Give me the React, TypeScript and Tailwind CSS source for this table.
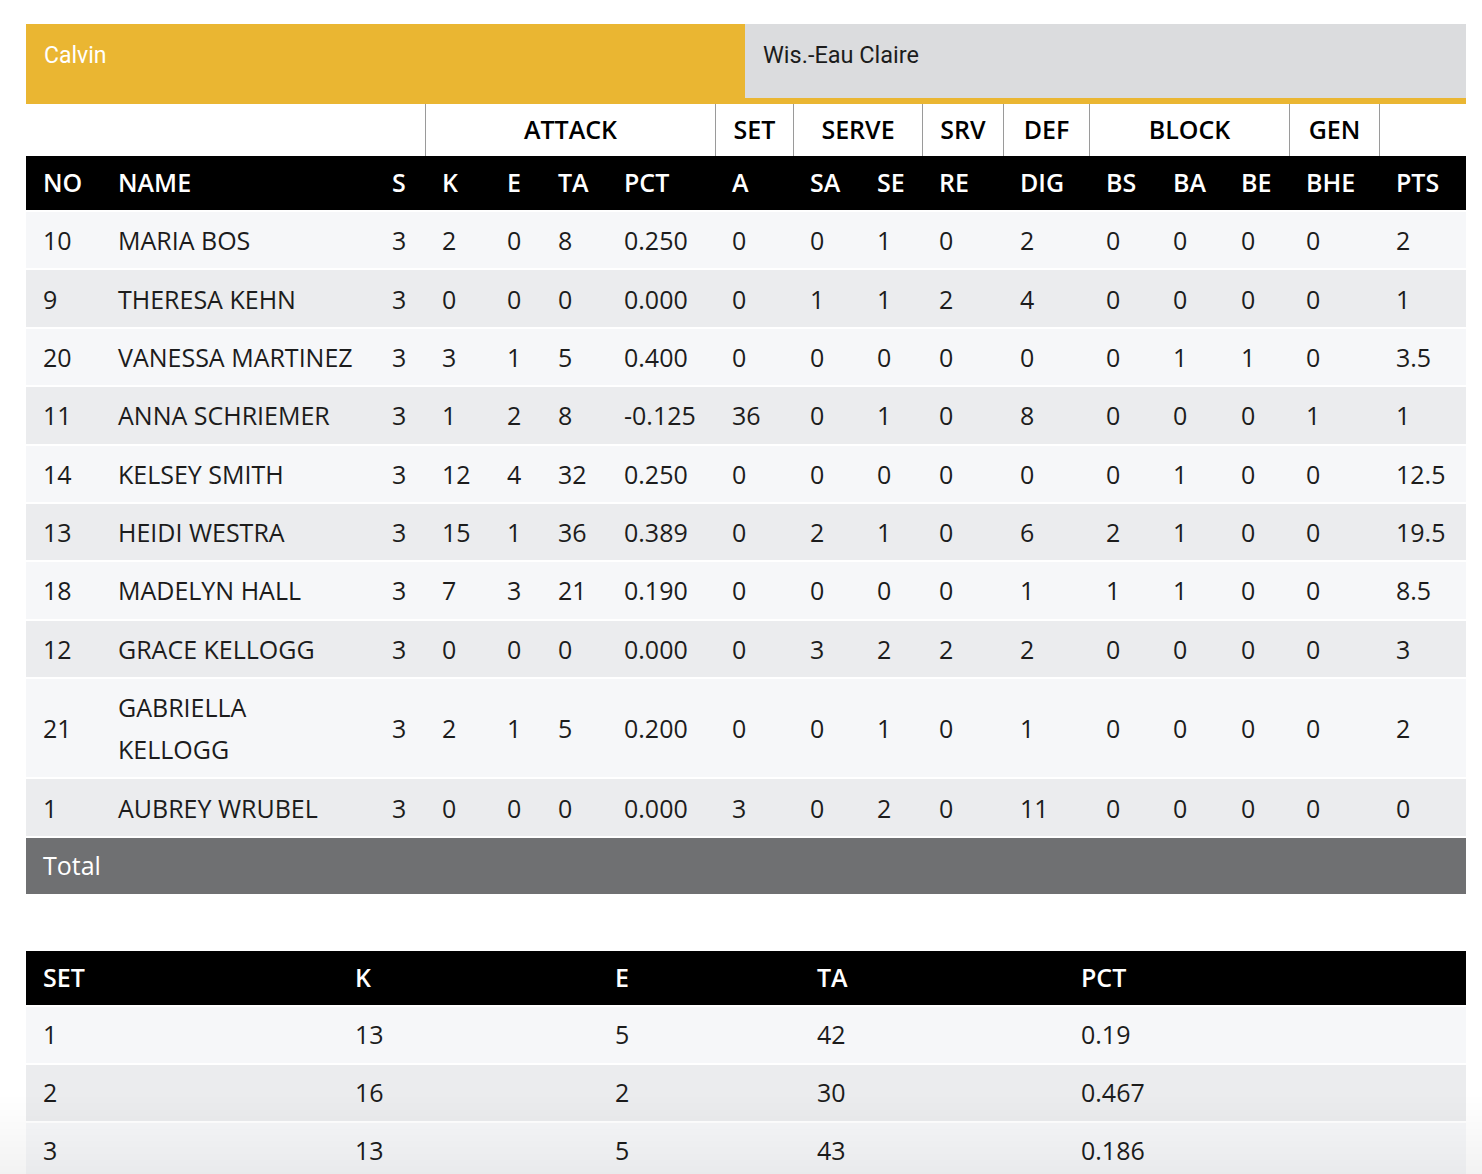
import React from 'react';

type Player = {
  no: string;
  name: string;
  stats: string[];
};

// S K E TA PCT A SA SE RE DIG BS BA BE BHE PTS
const players: Player[] = [
  { no: '10', name: 'MARIA BOS', stats: ['3', '2', '0', '8', '0.250', '0', '0', '1', '0', '2', '0', '0', '0', '0', '2'] },
  { no: '9', name: 'THERESA KEHN', stats: ['3', '0', '0', '0', '0.000', '0', '1', '1', '2', '4', '0', '0', '0', '0', '1'] },
  { no: '20', name: 'VANESSA MARTINEZ', stats: ['3', '3', '1', '5', '0.400', '0', '0', '0', '0', '0', '0', '1', '1', '0', '3.5'] },
  { no: '11', name: 'ANNA SCHRIEMER', stats: ['3', '1', '2', '8', '-0.125', '36', '0', '1', '0', '8', '0', '0', '0', '1', '1'] },
  { no: '14', name: 'KELSEY SMITH', stats: ['3', '12', '4', '32', '0.250', '0', '0', '0', '0', '0', '0', '1', '0', '0', '12.5'] },
  { no: '13', name: 'HEIDI WESTRA', stats: ['3', '15', '1', '36', '0.389', '0', '2', '1', '0', '6', '2', '1', '0', '0', '19.5'] },
  { no: '18', name: 'MADELYN HALL', stats: ['3', '7', '3', '21', '0.190', '0', '0', '0', '0', '1', '1', '1', '0', '0', '8.5'] },
  { no: '12', name: 'GRACE KELLOGG', stats: ['3', '0', '0', '0', '0.000', '0', '3', '2', '2', '2', '0', '0', '0', '0', '3'] },
  { no: '21', name: 'GABRIELLA KELLOGG', stats: ['3', '2', '1', '5', '0.200', '0', '0', '1', '0', '1', '0', '0', '0', '0', '2'] },
  { no: '1', name: 'AUBREY WRUBEL', stats: ['3', '0', '0', '0', '0.000', '3', '0', '2', '0', '11', '0', '0', '0', '0', '0'] },
];

const columns = ['NO', 'NAME', 'S', 'K', 'E', 'TA', 'PCT', 'A', 'SA', 'SE', 'RE', 'DIG', 'BS', 'BA', 'BE', 'BHE', 'PTS'];

const groups = [
  { label: '', line: false },
  { label: 'ATTACK', line: true },
  { label: 'SET', line: true },
  { label: 'SERVE', line: true },
  { label: 'SRV', line: true },
  { label: 'DEF', line: true },
  { label: 'BLOCK', line: true },
  { label: 'GEN', line: true },
  { label: '', line: true },
];

const sets = [
  ['1', '13', '5', '42', '0.19'],
  ['2', '16', '2', '30', '0.467'],
  ['3', '13', '5', '43', '0.186'],
];

const statCols =
  'grid grid-cols-[75px_274px_50px_65px_51px_66px_108px_78px_67px_62px_81px_86px_67px_68px_65px_90px_87px]';
const groupCols = 'grid grid-cols-[399px_290px_78px_129px_81px_86px_200px_90px_87px]';
const setCols = 'grid grid-cols-[312px_260px_202px_264px_402px]';

export default function App() {
  return (
    <div className="min-h-screen bg-white pt-6 px-[26px] pb-10 font-['Open_Sans',sans-serif] text-[25px] text-[#1c1c1c]">
      <div className="w-[1440px]">
        {/* Team tabs */}
        <div className="flex h-[80px] bg-[#eab632]">
          <div className="flex h-[64px] w-[719px] items-center pl-[18px] font-['Roboto',sans-serif] text-[23px] text-white">
            Calvin
          </div>
          <div className="h-[74px] flex-1 bg-[#dbdcde]">
            <div className="flex h-[64px] items-center pl-[18px] font-['Roboto',sans-serif] text-[23.5px] text-[#1c1c1c]">
              Wis.-Eau Claire
            </div>
          </div>
        </div>

        {/* Group header */}
        <div className={`${groupCols} h-[52px]`}>
          {groups.map((g, i) => (
            <div
              key={i}
              className={`flex items-center justify-center font-semibold text-black ${g.line ? 'border-l border-[#9a9a9a]' : ''}`}
            >
              {g.label}
            </div>
          ))}
        </div>

        {/* Stats table */}
        <div className="flex flex-col gap-[2px]">
          <div className={`${statCols} h-[54px] items-center bg-black font-semibold text-white`}>
            {columns.map((c) => (
              <div key={c} className="pl-[17px] whitespace-nowrap">
                {c}
              </div>
            ))}
          </div>
          {players.map((p, i) => (
            <div
              key={p.no}
              className={`${statCols} items-center py-[7.2px] leading-[42px] ${i % 2 === 0 ? 'bg-[#f6f7f9]' : 'bg-[#ebecee]'}`}
            >
              <div className="pl-[17px]">{p.no}</div>
              <div className="pl-[17px] pr-[17px]">{p.name}</div>
              {p.stats.map((s, j) => (
                <div key={j} className="pl-[17px] whitespace-nowrap">
                  {s}
                </div>
              ))}
            </div>
          ))}
          <div className="flex h-[56px] items-center bg-[#6f7072] pl-[17px] text-white">Total</div>
        </div>

        {/* Sets table */}
        <div className="mt-[57px] flex flex-col gap-[2px]">
          <div className={`${setCols} h-[54px] items-center bg-black font-semibold text-white`}>
            {['SET', 'K', 'E', 'TA', 'PCT'].map((c) => (
              <div key={c} className="pl-[17px]">
                {c}
              </div>
            ))}
          </div>
          {sets.map((row, i) => (
            <div
              key={row[0]}
              className={`${setCols} h-[56px] items-center ${i % 2 === 0 ? 'bg-[#f6f7f9]' : 'bg-[#ebecee]'}`}
            >
              {row.map((v, j) => (
                <div key={j} className="pl-[17px]">
                  {v}
                </div>
              ))}
            </div>
          ))}
        </div>
      </div>

      {/* bottom fade */}
      <div className="pointer-events-none fixed inset-x-0 bottom-0 h-[80px] bg-gradient-to-b from-transparent to-black/[0.05]" />
    </div>
  );
}
